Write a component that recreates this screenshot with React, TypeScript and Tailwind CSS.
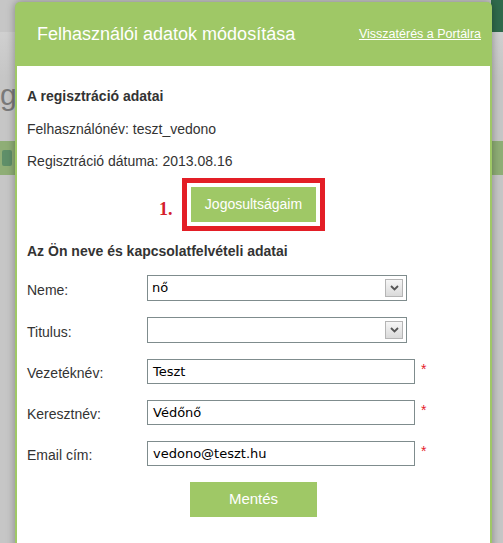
import { ReactNode } from 'react'

function Chevron() {
  return (
    <svg width="9" height="6" viewBox="0 0 9 6">
      <path d="M1 1l3.5 3.5L8 1" stroke="#555" strokeWidth="1.8" fill="none" />
    </svg>
  )
}

function SelectBox({ value }: { value: string }) {
  return (
    <div className="flex h-[26px] w-[260px] items-center justify-between border border-[#7f8c8d] bg-white pl-[4px] pr-[3px]">
      <span className="font-['DejaVu_Sans',sans-serif] text-[13px] text-black">{value}</span>
      <span className="flex h-[18px] w-[18px] items-center justify-center border border-[#b5b5b5] bg-gradient-to-b from-[#f6f6f6] to-[#dadada]">
        <Chevron />
      </span>
    </div>
  )
}

function TextBox({ value }: { value: string }) {
  return (
    <div className="flex items-start">
      <div className="flex h-[25px] w-[268px] items-center border border-[#7f8c8d] bg-white pl-[5px] font-['DejaVu_Sans',sans-serif] text-[13px] text-black">
        {value}
      </div>
      <span className="ml-[6px] mt-[3px] text-[14px] leading-[14px] text-[#e5202a]">*</span>
    </div>
  )
}

function Row({ label, children }: { label: string; children: ReactNode }) {
  return (
    <div className="flex items-center">
      <span className="w-[120px] pt-[4px] text-[14px] text-[#333]">{label}</span>
      {children}
    </div>
  )
}

export default function App() {
  return (
    <div className="relative h-[543px] w-[503px] overflow-hidden bg-[#c6c6c6] font-['Liberation_Sans',Arial,sans-serif]">
      {/* dimmed page behind the dialog */}
      <div className="flex h-[32px] justify-end">
        <div className="w-[12px] bg-[#2f6a4c]" />
      </div>
      <div className="h-[45px] bg-gradient-to-b from-[#d0d0d0] to-[#c6c6c6]" />
      <div className="h-[36px] text-[30px] leading-[36px] text-[#7a7a7a]">gé</div>
      <div className="h-[28px]" />
      <div className="flex h-[34px] items-center bg-[#8fae76] pl-[2px]">
        <div className="h-[16px] w-[10px] rounded-[2px] bg-[#5f8f69]" />
      </div>

      <div className="absolute left-[15px] top-[2px] w-[477px] rounded-t-[5px] bg-[#9fc866] shadow-[0_0_8px_rgba(0,0,0,0.35)]">
        <div className="flex h-[64px] items-center justify-between pl-[22px] pr-[11px] text-white">
          <h1 className="text-[18px]">Felhasználói adatok módosítása</h1>
          <a className="text-[12.5px] underline">Visszatérés a Portálra</a>
        </div>
        <div className="mx-[2px] h-[490px] bg-white pl-[10px] pt-[20px] text-[14px] text-[#333]">
          <h2 className="text-[14px] font-bold leading-[20px]">A regisztráció adatai</h2>
          <p className="mt-[13px] leading-[20px]">Felhasználónév: teszt_vedono</p>
          <p className="mt-[12px] leading-[20px]">Regisztráció dátuma: 2013.08.16</p>

          <div className="mt-[7px] flex justify-center pr-[10px]">
            <div className="relative border-[5px] border-[#e31e26] p-[4px]">
              <span className="absolute left-[-28px] top-[13px] font-['Liberation_Serif',serif] text-[18px] font-bold text-[#d4202a]">
                1.
              </span>
              <button className="h-[35px] w-[125px] bg-[#9fc866] text-[14px] text-white">Jogosultságaim</button>
            </div>
          </div>

          <h2 className="mt-[10px] text-[14px] font-bold leading-[20px]">Az Ön neve és kapcsolatfelvételi adatai</h2>

          <div className="mt-[14px] flex flex-col gap-[16px]">
            <Row label="Neme:">
              <SelectBox value="nő" />
            </Row>
            <Row label="Titulus:">
              <SelectBox value="" />
            </Row>
            <Row label="Vezetéknév:">
              <TextBox value="Teszt" />
            </Row>
            <Row label="Keresztnév:">
              <TextBox value="Védőnő" />
            </Row>
            <Row label="Email cím:">
              <TextBox value="vedono@teszt.hu" />
            </Row>
          </div>

          <div className="mt-[16px] flex justify-center pr-[10px]">
            <button className="h-[35px] w-[127px] bg-[#9fc866] text-[15px] text-white">Mentés</button>
          </div>
        </div>
      </div>
    </div>
  )
}
